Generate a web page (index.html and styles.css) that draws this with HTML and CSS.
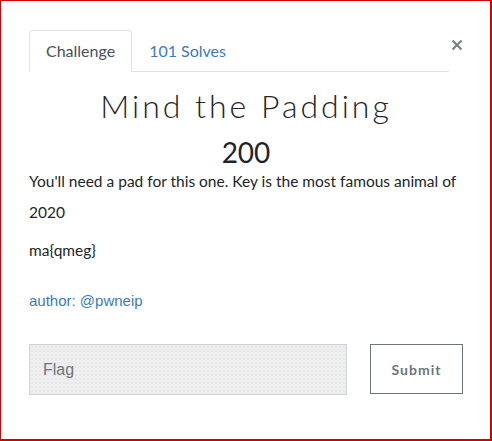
FILE: index.html
```html
<!DOCTYPE html>
<html>
<head>
<meta charset="utf-8">
<link rel="stylesheet" href="styles.css">
</head>
<body>
<div class="frame">
  <div class="header">
    <ul class="tabs">
      <li class="tab active">Challenge</li>
      <li class="tab">101 Solves</li>
    </ul>
    <button class="close" aria-label="Close">
      <svg width="12" height="12" viewBox="0 0 12 12"><path d="M1.5 1.5L10.5 10.5M10.5 1.5L1.5 10.5" stroke="#7b8187" stroke-width="2.2" stroke-linecap="butt"/></svg>
    </button>
  </div>
  <h2 class="title">Mind the Padding</h2>
  <h3 class="points">200</h3>
  <p class="desc">You'll need a pad for this one. Key is the most famous animal of 2020</p>
  <p class="desc flag-text">ma{qmeg}</p>
  <p class="author">author: @pwneip</p>
  <div class="submit-row">
    <input class="flag-input" type="text" placeholder="Flag">
    <button class="submit">Submit</button>
  </div>
</div>
</body>
</html>
```

FILE: styles.css
```css
html, body {
  margin: 0;
  padding: 0;
  background: #fff;
}
.frame {
  box-sizing: border-box;
  width: 492px;
  height: 441px;
  border-top: 1px solid #d40000;
  border-left: 1px solid #d40000;
  border-right: 2px solid #d40000;
  border-bottom: 2px solid #d40000;
  padding: 29px 27px 0 28px;
  font-family: Lato, "Noto Sans", sans-serif;
  color: #212529;
}
.header {
  display: flex;
  align-items: flex-start;
}
.tabs {
  flex: 1;
  display: flex;
  list-style: none;
  margin: 0;
  padding: 0;
  border-bottom: 1px solid #dee2e6;
  margin-right: 1px;
}
.tab {
  padding: 8px 16px;
  font-size: 16px;
  line-height: 24px;
  color: #3a7bbf;
  border: 1px solid transparent;
  border-bottom: 0;
  margin-bottom: -1px;
  border-top-left-radius: 4px;
  border-top-right-radius: 4px;
}
.tab.active {
  color: #495057;
  border-color: #dee2e6;
  background: #fff;
  padding-bottom: 9px;
}
.close {
  border: 0;
  background: none;
  padding: 0;
  margin: 9px 0 0 0;
  width: 13px;
  height: 12px;
  display: flex;
  justify-content: center;
}
.title {
  margin: 15px 0 0;
  text-align: center;
  font-family: Lato, sans-serif;
  font-weight: 300;
  font-size: 32px;
  line-height: 38px;
  letter-spacing: 3px;
  color: #212529;
}
.points {
  margin: 13px 0 0;
  text-align: center;
  font-weight: 400;
  font-size: 28px;
  line-height: 28px;
  color: #212529;
}
.desc {
  margin: 0 0 7px;
  font-size: 15.5px;
  line-height: 31px;
}
.flag-text {
  margin: 0;
}
.author {
  margin: 23px 0 0;
  font-family: "Liberation Sans", Arial, sans-serif;
  font-size: 15px;
  line-height: 24px;
  color: #3a7bbf;
}
.submit-row {
  display: flex;
  align-items: flex-start;
  gap: 23px;
  margin-top: 31px;
}
.flag-input {
  box-sizing: border-box;
  width: 318px;
  height: 51px;
  margin: 0;
  border: 1px solid #ccd1d9;
  background-color: #efefef;
  background-image: radial-gradient(circle, #e2e2e2 0.6px, transparent 0.9px);
  background-size: 4px 4px;
  padding: 0 13px;
  font-family: "Liberation Sans", Arial, sans-serif;
  font-size: 16px;
  color: #495057;
  outline: none;
}
.flag-input::placeholder {
  color: #6f757b;
}
.submit {
  box-sizing: border-box;
  width: 93px;
  height: 50px;
  margin: 0;
  border: 1px solid #6c757d;
  background: #fff;
  font-family: Lato, sans-serif;
  font-weight: 700;
  font-size: 14px;
  letter-spacing: 1px;
  color: #6c757d;
  padding: 0;
}
```
